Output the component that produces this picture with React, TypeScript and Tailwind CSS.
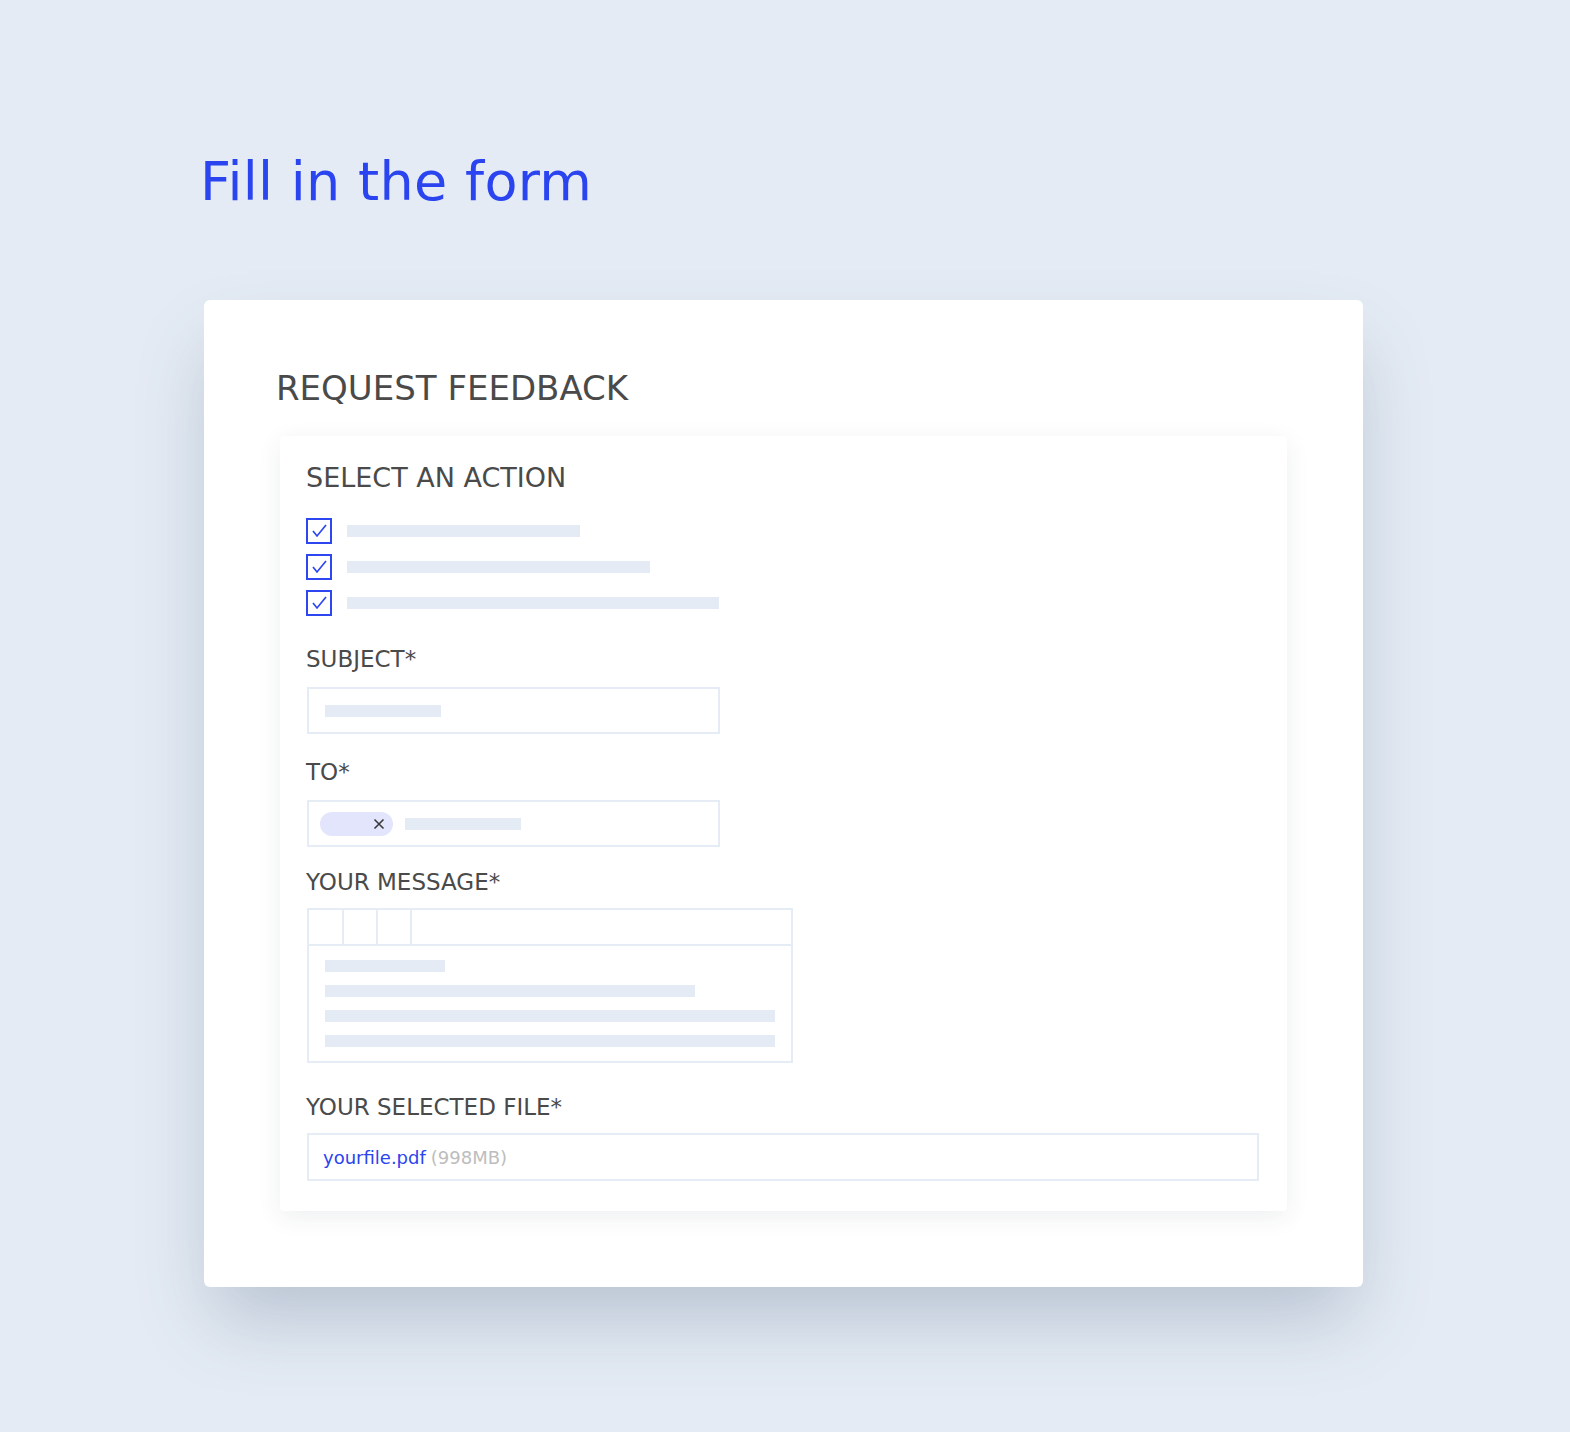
import React from 'react';

const font = { fontFamily: '"DejaVu Sans", "Open Sans", sans-serif' };

const Bar = ({ w }: { w: string }) => <div className={`h-3 bg-[#e4ebf4] ${w}`} />;

const CheckBox = () => (
  <div className="w-[26px] h-[26px] border-2 border-[#2d46f0] flex items-center justify-center">
    <svg width="18" height="18" viewBox="0 0 18 18" fill="none">
      <polyline points="3,9 7,14 16,3" stroke="#2d46f0" strokeWidth="1.7" strokeLinejoin="miter" />
    </svg>
  </div>
);

const Label = ({ children }: { children: React.ReactNode }) => (
  <div className="text-[23px] leading-none text-[#4a4a4a]">{children}</div>
);

export default function App() {
  const actions = ['w-[233px]', 'w-[303px]', 'w-[372px]'];

  return (
    <div className="min-h-screen w-[1570px] h-[1432px] bg-[#e4ebf4] pt-[155px]" style={font}>
      <div className="ml-[200px] w-[1163px]">
        <h1 className="text-[54px] leading-none text-[#2a44f0] tracking-[0.3px]">Fill in the form</h1>

        <div className="mt-[91px] ml-[4px] w-[1159px] bg-white rounded-md shadow-[0_40px_70px_-10px_rgba(70,90,120,0.28)] px-[74px] pt-[71px] pb-[76px]">
          <h2 className="text-[34px] leading-none text-[#4a4a4a] -ml-[2px]">REQUEST FEEDBACK</h2>

          <div className="mt-[31px] ml-[2px] w-[1007px] bg-white rounded shadow-[0_6px_24px_rgba(40,50,70,0.08)] pl-[26px] pr-[29px] pt-[28px] pb-[30px]">
            <div className="text-[27px] leading-none text-[#4a4a4a]">SELECT AN ACTION</div>

            <div className="mt-[27px] flex flex-col gap-[10px]">
              {actions.map((w) => (
                <div key={w} className="flex items-center gap-[15px]">
                  <CheckBox />
                  <Bar w={w} />
                </div>
              ))}
            </div>

            <div className="mt-[32px]">
              <Label>SUBJECT*</Label>
              <div className="mt-[16px] ml-[1px] w-[413px] h-[47px] border-2 border-[#e6ecf5] flex items-center pl-[16px]">
                <Bar w="w-[116px]" />
              </div>
            </div>

            <div className="mt-[27px]">
              <Label>TO*</Label>
              <div className="mt-[16px] ml-[1px] w-[413px] h-[47px] border-2 border-[#e6ecf5] flex items-center pl-[11px] gap-[12px]">
                <div className="w-[73px] h-[24px] rounded-full bg-[#e2e5fb] flex items-center justify-end pr-[8px]">
                  <svg width="12" height="12" viewBox="0 0 12 12">
                    <path d="M1.5 1.5 L10.5 10.5 M10.5 1.5 L1.5 10.5" stroke="#3a3a3a" strokeWidth="1.6" />
                  </svg>
                </div>
                <Bar w="w-[116px]" />
              </div>
            </div>

            <div className="mt-[24px]">
              <Label>YOUR MESSAGE*</Label>
              <div className="mt-[14px] ml-[1px] w-[486px] border-2 border-[#e6ecf5]">
                <div className="h-[36px] flex border-b-2 border-[#e6ecf5]">
                  <div className="w-[35px] border-r-2 border-[#e6ecf5]" />
                  <div className="w-[34px] border-r-2 border-[#e6ecf5]" />
                  <div className="w-[34px] border-r-2 border-[#e6ecf5]" />
                </div>
                <div className="px-[16px] pt-[14px] pb-[14px] flex flex-col gap-[13px]">
                  <Bar w="w-[120px]" />
                  <Bar w="w-[370px]" />
                  <Bar w="w-full" />
                  <Bar w="w-full" />
                </div>
              </div>
            </div>

            <div className="mt-[33px]">
              <Label>YOUR SELECTED FILE*</Label>
              <div className="mt-[14px] ml-[1px] w-[952px] h-[48px] border-2 border-[#e6ecf5] flex items-center pl-[14px] text-[18px]">
                <span className="text-[#2a44f0]">yourfile.pdf</span>
                <span className="ml-[5px] text-[#bdbdbd]">(998MB)</span>
              </div>
            </div>
          </div>
        </div>
      </div>
    </div>
  );
}
